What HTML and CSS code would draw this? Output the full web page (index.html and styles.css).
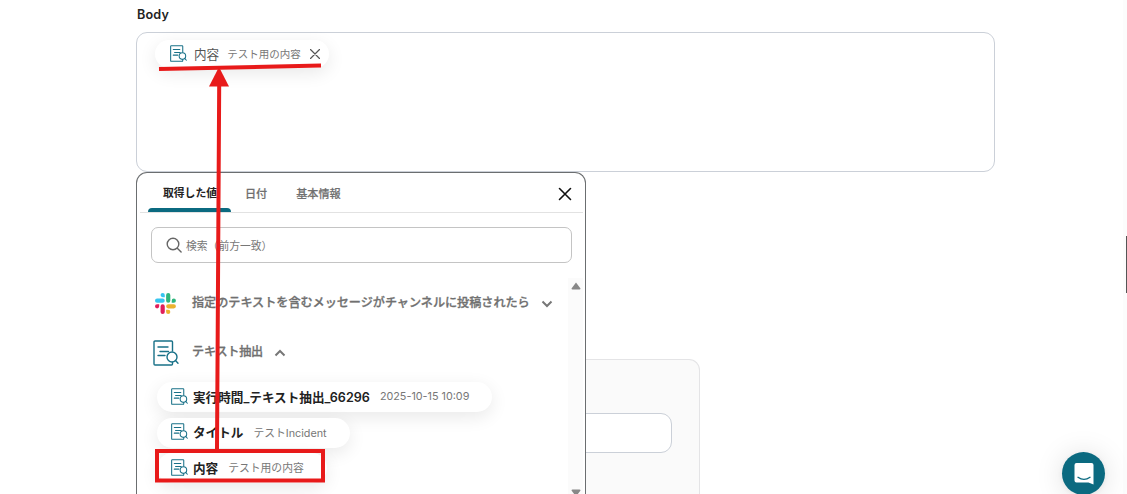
FILE: index.html
```html
<!DOCTYPE html>
<html lang="ja">
<head>
  <meta charset="UTF-8">
  <title>Body</title>
  <link rel="stylesheet" href="styles.css">
</head>
<body>

<svg class="defs" width="0" height="0">
  <symbol id="doc" viewBox="0 0 26 26">
    <path d="M12 25H2a1 1 0 0 1-1-1V2a1 1 0 0 1 1-1h16.500a1 1 0 0 1 1 1v9M19.500 22.500V24a1 1 0 0 1-1 1H12"/>
    <path d="M5 7h10M7 11.500h8.500M5 15.500h7"/>
    <circle cx="19" cy="17" r="5"/>
    <path d="M22.500 20.500l2.500 2.800"/>
  </symbol>
</svg>

<main class="form">
  <label class="label">Body</label>
  <div class="editor">
    <div class="chip value">
      <svg class="doc"><use href="#doc"/></svg>
      <b>内容</b>
      <span>テスト用の内容</span>
      <svg class="remove" viewBox="0 0 10 10"><path d="M.5.500l9 9M9.500.500l-9 9"/></svg>
    </div>
  </div>
  <section class="panel">
    <div class="input"></div>
  </section>

  <div class="popup">
    <nav class="tabs">
      <div class="tab active">取得した値</div>
      <div class="tab">日付</div>
      <div class="tab">基本情報</div>
      <svg class="close" viewBox="0 0 14 14"><path d="M1.500 1.500l11 11M12.500 1.500l-11 11"/></svg>
    </nav>
    <div class="search">
      <svg viewBox="0 0 16 16"><circle cx="7" cy="7" r="5.800"/><path d="M11.300 11.300l3.800 3.800"/></svg>
      <span>検索（前方一致）</span>
    </div>
    <div class="list">
      <div class="groups">
        <div class="group">
          <svg class="slack" viewBox="0 0 54 54">
            <path fill="#36c5f0" d="M19.700 0a5.400 5.400 0 0 0 0 10.800h5.400V5.400A5.400 5.400 0 0 0 19.700 0m0 14.400H5.400a5.400 5.400 0 0 0 0 10.800h14.300a5.400 5.400 0 0 0 0-10.800"/>
            <path fill="#2eb67d" d="M53.800 19.800a5.400 5.400 0 0 0-10.800 0v5.400h5.400a5.400 5.400 0 0 0 5.400-5.400m-14.400 0V5.400a5.400 5.400 0 0 0-10.800 0v14.400a5.400 5.400 0 0 0 10.800 0"/>
            <path fill="#ecb22e" d="M34 54a5.400 5.400 0 0 0 0-10.800h-5.400v5.400A5.400 5.400 0 0 0 34 54m0-14.400h14.400a5.400 5.400 0 0 0 0-10.800H34a5.400 5.400 0 0 0 0 10.800"/>
            <path fill="#e01e5a" d="M0 34.200a5.400 5.400 0 0 0 10.800 0v-5.400H5.400A5.400 5.400 0 0 0 0 34.200m14.300 0v14.400a5.400 5.400 0 0 0 10.800 0V34.200a5.400 5.400 0 0 0-10.800 0"/>
          </svg>
          <span>指定のテキストを含むメッセージがチャンネルに投稿されたら</span>
          <svg class="arrow" viewBox="0 0 12 8"><path d="M1.500 1.500L6 6l4.500-4.500"/></svg>
        </div>
        <div class="group extract">
          <svg class="doc large"><use href="#doc"/></svg>
          <span>テキスト抽出</span>
          <svg class="arrow" viewBox="0 0 12 8"><path d="M1.500 6.500L6 2l4.500 4.500"/></svg>
        </div>
        <div class="chips">
          <div class="chip">
            <svg class="doc"><use href="#doc"/></svg>
            <b>実行時間_テキスト抽出_66296</b>
            <span>2025-10-15 10:09</span>
          </div>
          <div class="chip">
            <svg class="doc"><use href="#doc"/></svg>
            <b>タイトル</b>
            <span>テストIncident</span>
          </div>
          <div class="chip">
            <svg class="doc"><use href="#doc"/></svg>
            <b>内容</b>
            <span>テスト用の内容</span>
          </div>
        </div>
      </div>
      <div class="scrollbar">
        <svg viewBox="0 0 10 8"><path d="M5 0.500L9.500 6.500Q9.500 7.500 8.500 7.500H1.500Q.5 7.500.5 6.500z"/></svg>
        <svg viewBox="0 0 10 8"><path d="M5 7.500L9.500 1.500Q9.500.500 8.500.500H1.500Q.5.500.5 1.500z"/></svg>
      </div>
    </div>
  </div>
</main>

<div class="page-scroll"><div class="thumb"></div></div>

<div class="chat">
  <svg viewBox="0 0 20 22"><path fill="#fff" d="M2.500 0h15A2 2 0 0 1 19.500 2v19.500L14.500 19.500h-12A2 2 0 0 1 .5 17.500V2A2 2 0 0 1 2.500 0z"/><path fill="none" stroke="#0b6a80" stroke-width="1.400" stroke-linecap="round" d="M4 14.300q6 4.200 12 0"/></svg>
</div>

<!-- 操作手順の矢印と枠 -->
<svg class="marks" viewBox="0 0 1127 494">
  <path d="M159 69L321 65.500M217 450L219.200 84"/>
  <path class="head" d="M219 67L229 86.500L209 86.500z"/>
  <rect x="157" y="451" width="166" height="29.500"/>
</svg>

</body>
</html>
```

FILE: styles.css
```css
* { box-sizing: border-box; }
body {
  margin: 0;
  height: 494px;
  overflow: hidden;
  position: relative;
  background: #fff;
  color: #222;
  font-family: Inter, "Noto Sans CJK JP", sans-serif;
  font-size: 12.6px;
}
svg { display: block; flex: none; fill: none; stroke-linecap: round; stroke-linejoin: round; }
.defs { position: absolute; }

.form { position: relative; width: 859px; height: 494px; margin-left: 136px; padding-top: 5px; }
.label { display: block; height: 27px; padding-left: 1px; line-height: 19px; font-weight: 600; letter-spacing: .2px; }
.editor { height: 140px; border: 1px solid #cbd0d8; border-radius: 11px; padding: 7px 18px; }
.panel {
  width: 564px; height: 135px;
  margin-top: 187px; padding: 53px 27px 0;
  background: #fafafa;
  border: 1px solid #e4e4e6;
  border-bottom: 0;
  border-radius: 11px 11px 0 0;
}
.input { height: 40px; background: #fff; border: 1px solid #cbd0d8; border-radius: 11px; }

.chip {
  display: flex; align-items: center;
  width: max-content; height: 30px;
  padding: 0 23px 2px 14px;
  border-radius: 15px;
  background: #fff;
  box-shadow: 0 5px 18px rgba(0, 0, 0, .09);
}
.chip b { margin: 0 10px 0 5px; font-weight: 600; white-space: nowrap; }
.chip span { font-size: 10.8px; color: #777; white-space: nowrap; }
.doc { width: 17px; height: 17px; stroke: #197188; stroke-width: 1.6; }
.large { width: 26px; height: 26px; stroke-width: 1.4; }
.value { height: 28px; padding: 0 9px 1px 15px; }
.value b { margin: 0 8px 1px 7px; font-weight: 400; color: #555; }
.value span { margin-bottom: 1px; font-size: 10.5px; }
.remove { width: 10px; height: 10px; margin-left: 9px; stroke: #555; stroke-width: 1.2; }

.popup {
  position: absolute; left: 0; top: 172px;
  width: 450px; height: 322px;
  background: #fff;
  border: 1px solid #6b6e70;
  border-bottom: 0;
  border-radius: 11px 11px 0 0;
}
.tabs { display: flex; height: 40px; margin: 0 2px 0 3px; padding-left: 8px; border-bottom: 1px solid #e2e2e2; }
.tab { height: 39px; padding: 1px 14px 0; line-height: 40px; font-size: 11.1px; font-weight: 500; color: #707070; -webkit-text-stroke: .2px; }
.tab:nth-child(3) { padding-left: 15px; }
.active { width: 83px; padding-left: 15px; color: #222; font-size: 10.8px; font-weight: 600; position: relative; white-space: nowrap; -webkit-text-stroke: 0; }
.active::after {
  content: ""; position: absolute; left: 0; right: 0; bottom: 0;
  height: 4px; border-radius: 4px 4px 0 0; background: #0b6a80;
}
.close { width: 14px; height: 14px; margin: 14px 11px 0 auto; stroke: #111; stroke-width: 1.6; }
.search {
  display: flex; align-items: center;
  height: 36px; margin: 14px 13px 0 14px; padding: 0 0 1px 14px;
  border: 1px solid #c4c4c4; border-radius: 7px;
  font-size: 10.8px; color: #777;
}
.search svg { width: 16px; height: 16px; margin-right: 4px; stroke: #666; stroke-width: 1.4; }

.list { display: flex; justify-content: space-between; margin: 15px 2px 0 0; }
.groups { padding-left: 15px; }
.group { display: flex; align-items: center; height: 49px; color: #707070; font-size: 12.1px; font-weight: 500; }
.group span { padding-bottom: 2px; white-space: nowrap; -webkit-text-stroke: .3px; }
.slack { width: 21px; height: 21px; margin: 2px 16px 0 3px; }
.group .large { margin: 2px 13px 0 1px; }
.arrow { width: 12px; height: 8px; margin: 2px 0 0 11px; stroke: #777; stroke-width: 2; stroke-linecap: butt; stroke-linejoin: miter; }
.extract span { letter-spacing: -.2px; }
.chips { display: grid; gap: 5.5px; margin: 6px 0 0 5px; }
.scrollbar {
  display: flex; flex-direction: column; justify-content: space-between; align-items: center;
  width: 15px; height: 216px; padding-top: 4px; background: #fbfbfb; overflow: hidden;
}
.scrollbar svg { width: 10px; height: 8px; fill: #888; }
.scrollbar svg:last-child { margin-bottom: -3px; }

.page-scroll { position: absolute; right: 0; top: 0; width: 4px; height: 494px; background: #fcfcfc; }
.thumb { width: 1px; height: 57px; margin: 236px 0 0 3px; background: #555; }
.chat {
  position: absolute; left: 1062px; top: 452px;
  width: 43px; height: 43px;
  display: flex; align-items: center; justify-content: center;
  border-radius: 50%;
  background: #0b6a80;
  box-shadow: 0 1px 5px rgba(0, 0, 0, .06), 0 2px 29px rgba(0, 0, 0, .13);
}
.chat svg { width: 20px; height: 22px; }
.marks { position: absolute; left: 0; top: 0; width: 1127px; height: 494px; stroke: #e81a1a; stroke-width: 4; stroke-linecap: butt; stroke-linejoin: miter; }
.head { fill: #e81a1a; stroke: none; }
```
